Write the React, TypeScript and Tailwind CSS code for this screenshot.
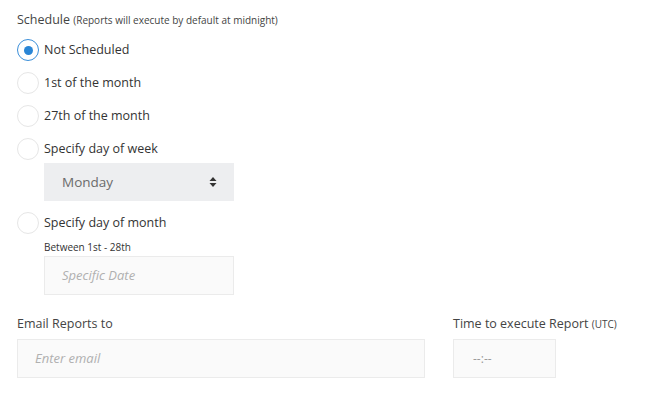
const options: Array<{ label: string; checked?: boolean }> = [
	{ label: "Not Scheduled", checked: true },
	{ label: "1st of the month" },
	{ label: "27th of the month" },
];

function Radio({ label, checked }: { label: string; checked?: boolean }) {
	return (
		<label className="flex items-center h-[20px]">
			<span
				className={
					checked
						? "flex items-center justify-center w-[22px] h-[22px] rounded-full border-[1.5px] border-[#3b8fd9] bg-white"
						: "flex items-center justify-center w-[22px] h-[22px] rounded-full border border-[#e6e6e6] bg-white"
				}
			>
				{checked && <span className="w-[9px] h-[9px] rounded-full bg-[#2a86d6]" />}
			</span>
			<span className="ml-[5px] text-[12.5px] text-[#333]">{label}</span>
		</label>
	);
}

export default function App() {
	return (
		<div
			className="w-[670px] h-[398px] bg-white pl-[17px] pt-[11px]"
			style={{ fontFamily: '"Open Sans", sans-serif' }}
		>
			<div className="text-[12.5px] text-[#444] leading-[18px]">
				Schedule{" "}
				<span className="text-[10px]">(Reports will execute by default at midnight)</span>
			</div>
			<div className="flex flex-col mt-[11px] gap-[13px]">
				{options.map((o) => (
					<Radio key={o.label} label={o.label} checked={o.checked} />
				))}
				<Radio label="Specify day of week" />
			</div>
			<div className="ml-[27px] mt-[4px] w-[190px] h-[38px] bg-[#edeef0] flex items-center justify-between pl-[18px] pr-[17px]">
				<span className="text-[13.5px] text-[#6b6b6b]">Monday</span>
				<svg width="8" height="12" viewBox="0 0 8 12">
					<path d="M4 1 L7.5 5 H0.5 Z" fill="#333" />
					<path d="M4 11 L7.5 7 H0.5 Z" fill="#333" />
				</svg>
			</div>
			<div className="mt-[12px]">
				<Radio label="Specify day of month" />
			</div>
			<div className="ml-[27px] mt-[7px] text-[10px] text-[#333] leading-[14px]">
				Between 1st - 28th
			</div>
			<div className="ml-[27px] mt-[2px] w-[190px] h-[39px] bg-[#fafafa] border border-[#ebebeb] flex items-center pl-[17px]">
				<span className="text-[13px] italic text-[#b0b0b0]">Specific Date</span>
			</div>
			<div className="flex mt-[20px]">
				<div className="w-[408px]">
					<div className="text-[12.5px] text-[#444] leading-[18px]">Email Reports to</div>
					<div className="mt-[6px] h-[39px] bg-[#fafafa] border border-[#ebebeb] flex items-center pl-[17px]">
						<span className="text-[13px] italic text-[#b0b0b0]">Enter email</span>
					</div>
				</div>
				<div className="ml-[28px]">
					<div className="text-[12.5px] text-[#444] leading-[18px]">
						Time to execute Report <span className="text-[10px]">(UTC)</span>
					</div>
					<div className="mt-[6px] w-[103px] h-[39px] bg-[#fafafa] border border-[#ebebeb] flex items-center pl-[19px]">
						<span className="text-[12px] text-[#9a9a9a]">--:--</span>
					</div>
				</div>
			</div>
		</div>
	);
}
